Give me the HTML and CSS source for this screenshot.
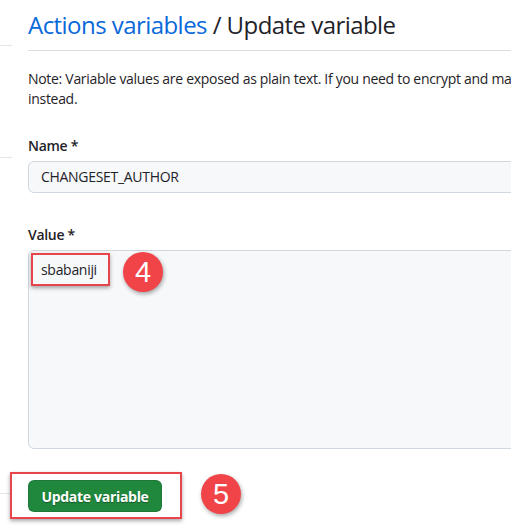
FILE: index.html
```html
<!DOCTYPE html>
<html lang="en">
<head>
<meta charset="utf-8">
<title>Update variable</title>
<link rel="stylesheet" href="styles.css">
</head>
<body>
<div class="layout">
  <nav class="sidebar">
    <div class="side-item side-a"></div>
    <div class="side-item side-b"></div>
    <div class="side-item side-c"></div>
  </nav>
  <main class="main">
    <h1 class="title"><a class="crumb" href="#">Actions variables</a> / Update variable</h1>
    <p class="note">Note: Variable values are exposed as plain text. If you need to encrypt and mask sensitive information, create a secret instead.</p>
    <div class="field">
      <label class="label">Name *</label>
      <div class="input">CHANGESET_AUTHOR</div>
    </div>
    <div class="field field-value">
      <label class="label">Value *</label>
      <div class="textarea">
        <span class="value-text">sbabaniji</span>
        <span class="hl hl-value"></span>
        <span class="badge badge-4">4</span>
      </div>
    </div>
    <div class="actions">
      <button class="btn-primary" type="button">Update variable</button>
      <span class="hl hl-button"></span>
      <span class="badge badge-5">5</span>
    </div>
  </main>
</div>
</body>
</html>
```
FILE: styles.css
```css
html, body {
  margin: 0;
  padding: 0;
  overflow: hidden;
  background: #ffffff;
}
body {
  font-family: "Open Sans", "Noto Sans", sans-serif;
  color: #1f2328;
  font-size: 14px;
  letter-spacing: -0.3px;
}
.layout {
  display: flex;
  width: 900px;
  min-height: 525px;
}
.sidebar {
  width: 12px;
  flex: none;
  display: flex;
  flex-direction: column;
}
.side-item {
  border-bottom: 1px solid #e1e6ea;
}
.side-a { height: 45px; }
.side-b { height: 111px; }
.side-c { height: 335px; }
.main {
  margin-left: 16px;
  width: 780px;
  position: relative;
  padding-bottom: 20px;
}
.title {
  margin: 0;
  padding: 10px 0 10px;
  font-size: 24px;
  line-height: 30px;
  font-weight: 400;
  letter-spacing: -0.55px;
  border-bottom: 1px solid #d8dee4;
  color: #1f2328;
}
.crumb {
  color: #0969da;
  text-decoration: none;
}
.note {
  margin: 18px 0 0;
  line-height: 20px;
  font-size: 14px;
}
.field {
  margin-top: 27px;
  display: flex;
  flex-direction: column;
}
.field-value {
  margin-top: 32px;
}
.label {
  font-weight: 600;
  line-height: 20px;
  margin-bottom: 5px;
}
.input {
  height: 30px;
  line-height: 30px;
  padding: 0 12px;
  background: #f6f8fa;
  border: 1px solid #d0d7de;
  border-radius: 6px;
}
.textarea {
  position: relative;
  height: 188px;
  padding: 9px 12px 0;
  line-height: 20px;
  background: #f6f8fa;
  border: 1px solid #d0d7de;
  border-radius: 6px;
}
.hl {
  position: absolute;
  border: 2px solid #e8444b;
  box-shadow: 0 2px 4px rgba(0, 0, 0, 0.35);
}
.hl-value {
  left: 2px;
  top: 2px;
  width: 75px;
  height: 29px;
}
.badge {
  position: absolute;
  width: 40px;
  height: 40px;
  border-radius: 50%;
  background: #f04448;
  color: #ffffff;
  font-family: "Liberation Sans", Arial, sans-serif;
  font-size: 29px;
  letter-spacing: 0;
  line-height: 40px;
  text-align: center;
  box-shadow: 1px 2px 4px rgba(0, 0, 0, 0.35);
}
.badge-4 {
  left: 94px;
  top: 1px;
}
.actions {
  position: relative;
  margin-top: 31px;
  display: flex;
}
.btn-primary {
  width: 134px;
  height: 32px;
  border: 1px solid rgba(31, 35, 40, 0.15);
  border-radius: 6px;
  background: #1f883d;
  color: #ffffff;
  font-family: "Open Sans", "Noto Sans", sans-serif;
  font-size: 14px;
  font-weight: 700;
  letter-spacing: -0.3px;
  padding: 0;
  text-shadow: 0 1px 1px rgba(0, 0, 0, 0.35);
}
.hl-button {
  left: -18px;
  top: -8px;
  width: 168px;
  height: 43px;
}
.badge-5 {
  left: 173px;
  top: -6px;
}
```
